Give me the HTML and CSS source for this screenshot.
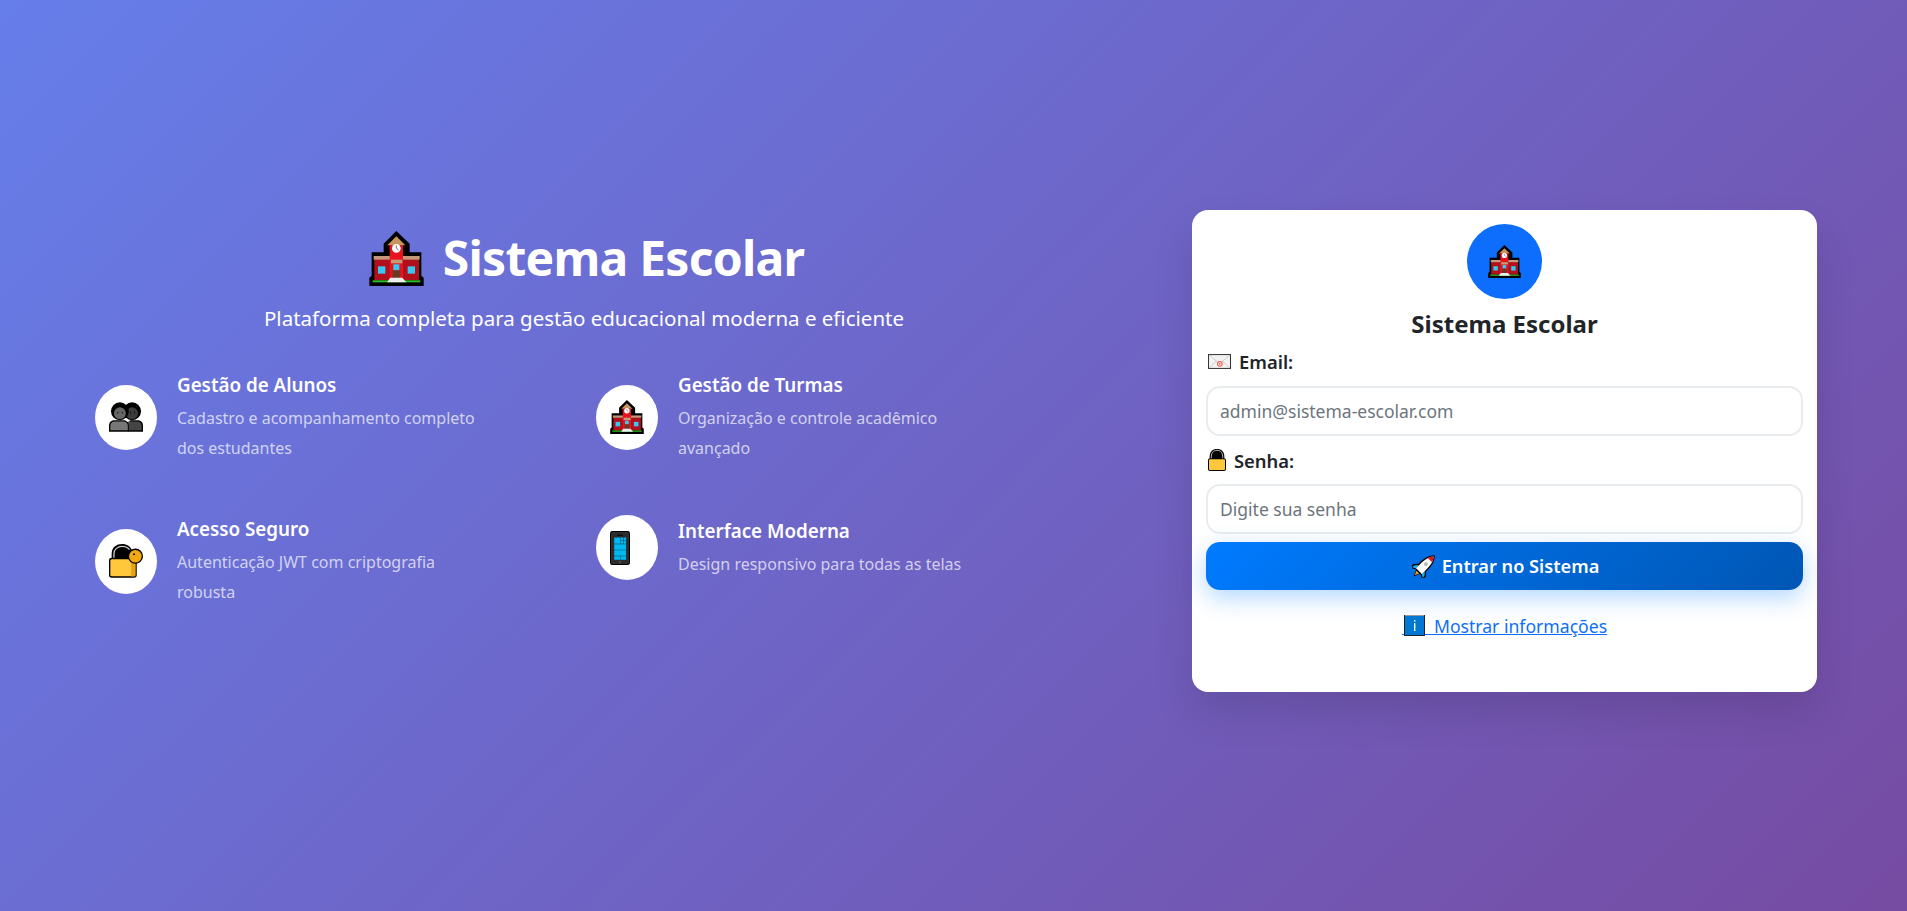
FILE: index.html
```html
<!DOCTYPE html>
<html lang="pt-BR">
<head>
<meta charset="utf-8">
<title>Sistema Escolar</title>
<link rel="stylesheet" href="styles.css">
</head>
<body>
<svg class="defs" width="0" height="0" aria-hidden="true">
  <symbol id="school" viewBox="27 20 163 165">
    <path fill="#000" d="M108 20l40 38v26h35v70l7 6v25H27v-25l7-6V84h36V58z"/>
    <path fill="#c8955e" d="M108 36l27 27H81z"/>
    <rect fill="#b20f1c" x="42" y="104" width="134" height="64"/>
    <rect fill="#c49a78" x="40" y="95" width="138" height="11"/>
    <rect fill="#e9131f" x="88" y="62" width="40" height="104"/>
    <circle fill="#fff" cx="108" cy="72" r="13"/>
    <path fill="none" stroke="#777" stroke-width="3" d="M108 63v9l7 5"/>
    <rect fill="#c49a78" x="92" y="106" width="34" height="11"/>
    <rect fill="#35c9f2" x="99" y="120" width="18" height="18"/>
    <rect fill="#6b3a22" x="97" y="138" width="23" height="23"/>
    <rect fill="#35c9f2" x="53" y="126" width="22" height="22"/>
    <rect fill="#35c9f2" x="142" y="126" width="22" height="22"/>
    <rect fill="#28bf22" x="37" y="168" width="143" height="6"/>
    <path fill="#eee" d="M90 160h36l12 14H80z"/>
  </symbol>
  <symbol id="people" viewBox="55 73 103 89">
    <path fill="#000" d="M118 127h24c10 0 16 7 16 16v19h-45z"/>
    <path fill="#444" d="M113 131h28c8 0 13 5 13 13v14h-41z"/>
    <circle fill="#000" cx="125" cy="100" r="27"/>
    <circle fill="#3c3c3c" cx="125" cy="106" r="18"/>
    <path fill="#000" d="M71 127h28c10 0 16 7 16 16v19H55v-19c0-9 6-16 16-16z"/>
    <path fill="#777" d="M72 131h27c8 0 13 5 13 13v14H59v-14c0-8 5-13 13-13z"/>
    <circle fill="#000" cx="88" cy="100" r="27"/>
    <circle fill="#666" cx="88" cy="106" r="18"/>
    <rect fill="#111" x="80" y="102" width="3" height="5"/>
    <rect fill="#111" x="94" y="102" width="3" height="5"/>
    <rect fill="#111" x="119" y="102" width="3" height="5"/>
    <rect fill="#111" x="131" y="102" width="3" height="5"/>
  </symbol>
  <symbol id="keylock" viewBox="55 55 103 103">
    <path fill="#000" d="M63 102V85c0-20 14-30 32-30 14 0 26 8 30 20v27z"/>
    <path fill="none" stroke="#c9c9c9" stroke-width="4" d="M70 100V85c0-14 11-23 25-23 9 0 17 3 22 10"/>
    <rect fill="#000" x="55" y="97" width="84" height="60" rx="8"/>
    <rect fill="#ffc73c" x="59" y="101" width="76" height="52" rx="5"/>
    <rect fill="#e7a412" x="122" y="106" width="13" height="47"/>
    <circle fill="#000" cx="135" cy="92" r="23"/>
    <circle fill="#f1a90d" cx="135" cy="92" r="19"/>
    <circle fill="#000" cx="131" cy="86" r="3"/>
  </symbol>
  <symbol id="phone" viewBox="58 63 60 102">
    <rect fill="#000" width="60" height="102" x="58" y="63" rx="7"/>
    <rect fill="#2c2c2c" width="54" height="96" x="61" y="66" rx="5"/>
    <rect fill="#000" x="80" y="74" width="17" height="3"/>
    <rect fill="#0a5a78" x="70" y="82" width="37" height="68"/>
    <rect fill="#00b9f2" x="71" y="83" width="18" height="18"/>
    <rect fill="#00b9f2" x="91" y="83" width="7" height="7"/>
    <rect fill="#00b9f2" x="100" y="83" width="6" height="7"/>
    <rect fill="#00b9f2" x="91" y="92" width="7" height="9"/>
    <rect fill="#00b9f2" x="100" y="92" width="6" height="9"/>
    <rect fill="#00b9f2" x="71" y="103" width="35" height="16"/>
    <rect fill="#00b9f2" x="71" y="121" width="35" height="16"/>
    <rect fill="#00b9f2" x="71" y="139" width="18" height="10"/>
    <rect fill="#00b9f2" x="91" y="139" width="15" height="10"/>
    <circle fill="#888" cx="88" cy="156" r="2"/>
  </symbol>
  <symbol id="mail" viewBox="0 0 68 44">
    <rect fill="#333" width="68" height="44"/>
    <rect fill="#f2f2f2" x="3" y="3" width="62" height="38"/>
    <path fill="none" stroke="#bbb" stroke-width="2" d="M3 3l31 25L65 3M3 41l22-20M65 41L43 21"/>
    <circle fill="none" stroke="#ee5a45" stroke-width="3" cx="35" cy="29" r="7"/>
    <circle fill="#ee5a45" cx="35" cy="29" r="2.5"/>
  </symbol>
  <symbol id="lock" viewBox="0 0 54 66">
    <path fill="#000" d="M5 32V22C5 8 14 0 27 0s22 8 22 22v10z"/>
    <path fill="none" stroke="#b9b9b9" stroke-width="3" d="M10 30V22c0-11 7-18 17-18s17 7 17 18v8"/>
    <rect fill="#000" y="28" width="54" height="38" rx="6"/>
    <rect fill="#ffc73c" x="3" y="31" width="48" height="32" rx="3"/>
  </symbol>
  <symbol id="rocket" viewBox="-34 -34 68 68">
    <g transform="rotate(45)">
      <path fill="#000" d="M-9 20L9 20L0 42z"/>
      <path fill="#f7941d" d="M-6 23L6 23L0 37z"/>
      <path fill="#000" d="M0-47C15-32 17-14 16 5L26 16V31L11 23H-11L-26 31V16L-16 5C-17-14-15-32 0-47z"/>
      <path fill="#1fb2e8" d="M-13 7L-22 18V25L-11 19zM13 7L22 18V25L11 19z"/>
      <path fill="#fff" d="M0-42C11-30 13-14 12 19H-12C-13-14-11-30 0-42z"/>
      <path fill="#e3131f" d="M0-42C4-38 7-33 9-27H-9C-7-33-4-38 0-42z"/>
      <circle fill="#bbb" r="6" cy="-10"/>
    </g>
  </symbol>
  <symbol id="info" viewBox="0 0 21 21">
    <rect fill="#222" width="21" height="21"/>
    <rect fill="#999" x="1" y="0" width="19" height="1"/>
    <rect fill="#0078d4" x="1" y="1" width="19" height="19"/>
    <rect fill="#fff" x="10" y="5" width="1.4" height="1.6"/>
    <rect fill="#fff" x="10" y="8" width="1.4" height="8"/>
  </symbol>
</svg>

<main class="page">
  <section class="intro">
    <h1 class="intro-title"><svg class="ico-title"><use href="#school"/></svg><span>Sistema Escolar</span></h1>
    <p class="intro-sub">Plataforma completa para gestão educacional moderna e eficiente</p>
    <div class="features">
      <article class="feature">
        <div class="feature-icon"><svg class="ico-feature"><use href="#people"/></svg></div>
        <div class="feature-text">
          <h3>Gestão de Alunos</h3>
          <p>Cadastro e acompanhamento completo<br>dos estudantes</p>
        </div>
      </article>
      <article class="feature">
        <div class="feature-icon"><svg class="ico-feature"><use href="#school"/></svg></div>
        <div class="feature-text">
          <h3>Gestão de Turmas</h3>
          <p>Organização e controle acadêmico<br>avançado</p>
        </div>
      </article>
      <article class="feature">
        <div class="feature-icon"><svg class="ico-feature"><use href="#keylock"/></svg></div>
        <div class="feature-text">
          <h3>Acesso Seguro</h3>
          <p>Autenticação JWT com criptografia<br>robusta</p>
        </div>
      </article>
      <article class="feature">
        <div class="feature-icon"><svg class="ico-phone"><use href="#phone"/></svg></div>
        <div class="feature-text">
          <h3>Interface Moderna</h3>
          <p>Design responsivo para todas as telas</p>
        </div>
      </article>
    </div>
  </section>

  <section class="card">
    <div class="avatar"><svg class="ico-avatar"><use href="#school"/></svg></div>
    <h2 class="card-title">Sistema Escolar</h2>
    <form class="login">
      <label class="field-label" for="email"><svg class="ico-mail"><use href="#mail"/></svg>Email:</label>
      <input class="field-input" id="email" type="email" placeholder="admin@sistema-escolar.com">
      <label class="field-label field-label-2" for="senha"><svg class="ico-lock"><use href="#lock"/></svg>Senha:</label>
      <input class="field-input" id="senha" type="password" placeholder="Digite sua senha">
      <button class="submit" type="button"><svg class="ico-rocket"><use href="#rocket"/></svg>Entrar no Sistema</button>
    </form>
    <div class="link-row">
      <a class="info-link" href="#"><svg class="ico-info"><use href="#info"/></svg>&nbsp;&nbsp;&nbsp;&nbsp;&nbsp;&nbsp;&nbsp;Mostrar informações</a>
    </div>
  </section>
</main>
</body>
</html>
```
FILE: styles.css
```css
* { box-sizing: border-box; }
html, body { margin: 0; height: 100%; }
body {
  font-family: "Noto Sans", "Open Sans", sans-serif;
  background: linear-gradient(135deg, #667eea 0%, #764ba2 100%);
  color: #212529;
  overflow: hidden;
}
.defs { display: block; height: 0; width: 0; }
.page { display: flex; align-items: flex-start; height: 911px; }

.intro { width: 1168px; padding: 229px 95px 0; color: #fff; }
.intro-title {
  display: flex; justify-content: center; align-items: center; gap: 19px;
  margin: 0 0 16px; height: 58px; padding-left: 5px;
  font-size: 48px; line-height: 58px; font-weight: 700;
  letter-spacing: -0.75px;
}
.ico-title { width: 55px; height: 55px; }
.intro-sub { margin: 0 0 38px; text-align: center; font-size: 20.5px; line-height: 30px; }

.features { display: grid; grid-template-columns: 1fr 1fr; column-gap: 24px; row-gap: 52px; align-items: start; }
.feature { display: flex; align-items: center; gap: 20px; }
.feature-icon {
  width: 62px; height: 65px; flex: none; border-radius: 50%;
  background: #fff; display: flex; align-items: center; justify-content: center;
}
.ico-feature { width: 34px; height: 34px; }
.ico-phone { width: 20px; height: 34px; margin-right: 14px; }
.feature-text { padding-top: 1px; }
.feature-text h3 { margin: 0 0 4px; font-size: 18.8px; line-height: 27px; font-weight: 600; }
.feature-text p { margin: 0; font-size: 16px; line-height: 30px; color: rgba(255,255,255,.7); }

.card {
  width: 625px; margin: 210px 0 0 24px; height: 482px; padding: 14px;
  background: #fff; border-radius: 16px;
  box-shadow: 0 20px 40px rgba(0,0,0,.12);
}
.avatar {
  width: 75px; height: 75px; margin: 0 auto; border-radius: 50%;
  background: #0d6efd; display: flex; align-items: center; justify-content: center;
}
.ico-avatar { width: 33px; height: 33px; }
.card-title { margin: 10px 0 11px; text-align: center; font-size: 24px; line-height: 29px; font-weight: 700; }
.login { display: flex; flex-direction: column; }
.field-label { display: flex; align-items: center; height: 24px; font-size: 18.4px; font-weight: 600; margin: 0 0 13px; }
.field-label-2 { margin-top: 12px; margin-bottom: 12px; }
.ico-mail { width: 23px; height: 15px; margin-right: 8px; margin-left: 2px; }
.ico-lock { width: 18px; height: 22px; margin-right: 8px; margin-left: 2px; }
.field-input {
  width: 100%; height: 50px; padding: 0 12px;
  border: 2px solid #e9ecef; border-radius: 14px; background: #fff;
  font: 400 17.5px "Noto Sans", sans-serif;
}
.field-input::placeholder { color: #6c757d; opacity: 1; }
.submit {
  margin-top: 8px; height: 48px; border: 0; padding: 0 0 0 2px; border-radius: 14px;
  background: linear-gradient(135deg, #007bff 0%, #0056b3 100%);
  box-shadow: 0 8px 25px rgba(0,123,255,.3);
  color: #fff; font: 600 18.2px "Noto Sans", sans-serif;
  display: flex; align-items: center; justify-content: center; gap: 7px;
}
.ico-rocket { width: 23px; height: 23px; }
.link-row { margin-top: 24px; text-align: center; }
.info-link { position: relative; font-size: 17.6px; line-height: 24px; color: #0d6efd; text-decoration: underline; }
.ico-info { position: absolute; left: 2px; top: 1px; width: 21px; height: 21px; }
```
